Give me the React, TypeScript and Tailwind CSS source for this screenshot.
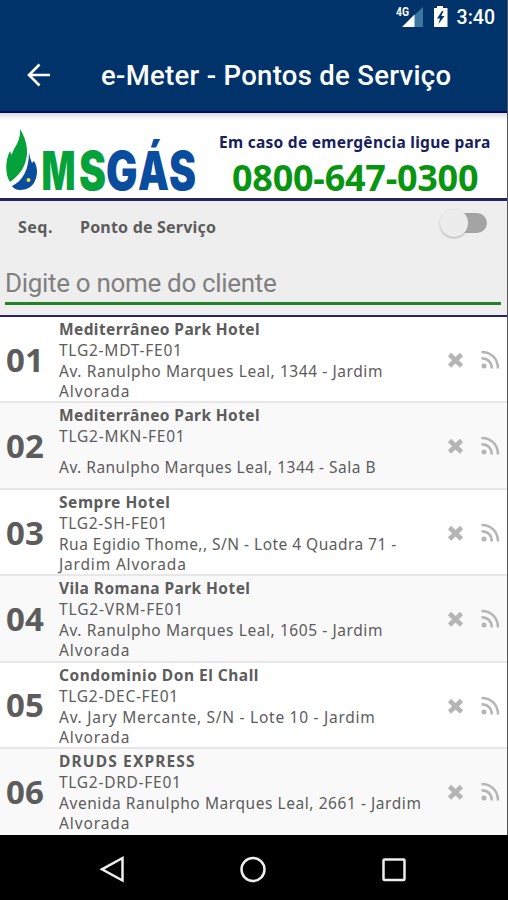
import React from "react";

type Point = {
  seq: string;
  name: string;
  nameTracking: string;
  code: string;
  codeTracking: string;
  address: { text: string; tracking: string }[];
};

const points: Point[] = [
  {
    seq: "01",
    name: "Mediterrâneo Park Hotel",
    nameTracking: "tracking-[0.4px]",
    code: "TLG2-MDT-FE01",
    codeTracking: "tracking-[0.75px]",
    address: [
      { text: "Av. Ranulpho Marques Leal, 1344 - Jardim", tracking: "tracking-[0.58px]" },
      { text: "Alvorada", tracking: "tracking-[0.9px]" },
    ],
  },
  {
    seq: "02",
    name: "Mediterrâneo Park Hotel",
    nameTracking: "tracking-[0.4px]",
    code: "TLG2-MKN-FE01",
    codeTracking: "tracking-[0.77px]",
    address: [{ text: "Av. Ranulpho Marques Leal, 1344 - Sala B", tracking: "tracking-[0.48px]" }],
  },
  {
    seq: "03",
    name: "Sempre Hotel",
    nameTracking: "tracking-[0.55px]",
    code: "TLG2-SH-FE01",
    codeTracking: "tracking-[0.68px]",
    address: [
      { text: "Rua Egidio Thome,, S/N - Lote 4 Quadra 71 -", tracking: "tracking-[0.47px]" },
      { text: "Jardim Alvorada", tracking: "tracking-[0.83px]" },
    ],
  },
  {
    seq: "04",
    name: "Vila Romana Park Hotel",
    nameTracking: "tracking-[0.43px]",
    code: "TLG2-VRM-FE01",
    codeTracking: "tracking-[0.85px]",
    address: [
      { text: "Av. Ranulpho Marques Leal, 1605 - Jardim", tracking: "tracking-[0.58px]" },
      { text: "Alvorada", tracking: "tracking-[0.9px]" },
    ],
  },
  {
    seq: "05",
    name: "Condominio Don El Chall",
    nameTracking: "tracking-[0.5px]",
    code: "TLG2-DEC-FE01",
    codeTracking: "tracking-[0.7px]",
    address: [
      { text: "Av. Jary Mercante, S/N - Lote 10 - Jardim", tracking: "tracking-[0.73px]" },
      { text: "Alvorada", tracking: "tracking-[0.9px]" },
    ],
  },
  {
    seq: "06",
    name: "DRUDS EXPRESS",
    nameTracking: "tracking-[1.15px]",
    code: "TLG2-DRD-FE01",
    codeTracking: "tracking-[0.72px]",
    address: [
      { text: "Avenida Ranulpho Marques Leal, 2661 - Jardim", tracking: "tracking-[0.56px]" },
      { text: "Alvorada", tracking: "tracking-[0.9px]" },
    ],
  },
];

function StatusBar() {
  return (
    <div className="flex h-9 items-center justify-end pr-3 text-white">
      <svg className="h-9 w-[60px]" viewBox="0 0 60 36">
        <path d="M28 7V27H19V15.500Z" fill="#3a78a2" />
        <path d="M7 27L19.500 14.500V27Z" fill="#fff" />
        <text x="1" y="16" fontSize="12" fontWeight="700" fill="#fff" fontFamily="Roboto, sans-serif" textLength="13" lengthAdjust="spacingAndGlyphs">4G</text>
        <path d="M42 6h6v2h4.500v19H39V8h3z" fill="#fff" />
        <path d="M47 11l-5 7.500h3l-1.500 5.500 6-8h-3.200l2.200-5z" fill="#00336a" />
      </svg>
      <span className="ml-0.5 text-[19.500px] leading-9 font-medium">3:40</span>
    </div>
  );
}

function Logo() {
  return (
    <svg className="h-[85px] w-[205px] shrink-0" viewBox="0 113 205 85">
      <path d="M20 129C25 137 27.500 146 27 154C26 166 20 175 10 182C5 175 5 160 10 151L11.500 155L14 149C18 143 20.500 137 20 129Z" fill="#05a23b" />
      <path d="M29 152C30 159 31 160 32 163L34 161C37 166 38 172 36 178C34 186 28 190 20 190C16 190 13 188 12 186C23 181 29 169 29 152Z" fill="#0a4c9e" />
      <circle cx="28.500" cy="180" r="2" fill="#e8e337" />
      <g fontFamily="Inter, sans-serif" fontWeight="900" fontSize="53">
        <text x="41.500" y="189.500" fill="#05a23b" textLength="34" lengthAdjust="spacingAndGlyphs">M</text>
        <text x="79" y="189.500" fill="#05a23b" textLength="27" lengthAdjust="spacingAndGlyphs">S</text>
        <text x="106" y="189.500" fill="#0a4c9e" textLength="31.500" lengthAdjust="spacingAndGlyphs">G</text>
        <text x="138" y="189.500" fill="#0a4c9e" textLength="31" lengthAdjust="spacingAndGlyphs">Á</text>
        <text x="169" y="189.500" fill="#0a4c9e" textLength="27" lengthAdjust="spacingAndGlyphs">S</text>
      </g>
    </svg>
  );
}

function Row({ point, striped }: { point: Point; striped: boolean }) {
  return (
    <li className={`flex h-[86.4px] shrink-0 border-b-2 border-[#e7e7e7] text-[#5c5c5c] last:h-[86px] last:border-b-0 ${striped ? "bg-[#f9f9f9]" : "bg-white"}`}>
      <div className="flex h-[85px] w-[59px] items-center pl-1.5 text-[33px] font-bold">{point.seq}</div>
      <div className="flex min-w-0 flex-1 flex-col whitespace-nowrap">
        <span className={`mt-0.5 text-[15.500px] leading-[21px] font-bold ${point.nameTracking}`}>{point.name}</span>
        <span className={`text-[15.500px] leading-[21px] ${point.codeTracking}`}>{point.code}</span>
        <div className="flex h-10 flex-col justify-center">
          {point.address.map((line) => (
            <span key={line.text} className={`text-[15.500px] leading-[20px] ${line.tracking}`}>{line.text}</span>
          ))}
        </div>
      </div>
      <svg className="mt-[33px] mr-[7px] h-5 w-[54px] shrink-0" viewBox="0 0 54 20">
        <path d="M3.500 4.500L15.500 16M15.500 4.500L3.500 16" stroke="#b5b5b5" strokeWidth="4.600" fill="none" />
        <g stroke="#b5b5b5" strokeWidth="2.500" fill="none">
          <path d="M35.500 1.900C45.500 1.900 52 9 52 18.500" />
          <path d="M35.500 8.200C42 8.200 45.800 12.500 45.800 18.500" />
        </g>
        <circle cx="38" cy="16" r="2.500" fill="#b5b5b5" />
      </svg>
    </li>
  );
}

export default function App() {
  return (
    <div className="flex h-[900px] w-[508px] flex-col overflow-hidden bg-black font-['Noto_Sans',sans-serif]">
      <div className="flex h-[835px] flex-col border-r border-[#555]">
        <header className="h-[113px] shrink-0 border-b-2 border-[#06095c] bg-[#00336a] font-['Roboto',sans-serif]">
          <StatusBar />
          <div className="flex h-[77px] items-center pl-[26px] text-white">
            <svg className="h-6 w-6" viewBox="0 0 24 24" fill="none" stroke="#fff" strokeWidth="2.600">
              <path d="M24 12H3M13.500 1.500L3 12l10.500 10.500" />
            </svg>
            <h1 className="mt-0.5 ml-[51px] text-[27.500px] font-medium tracking-[0.3px] whitespace-nowrap">e-Meter - Pontos de Serviço</h1>
          </div>
        </header>

        <section className="flex h-[88px] shrink-0 border-b-[3px] border-[#272462] bg-gradient-to-b from-[#dcdce4] via-white via-[8%] to-white">
          <Logo />
          <div className="flex flex-1 flex-col whitespace-nowrap">
            <p className="mt-[18px] ml-3.5 text-[15.500px] leading-[22px] font-bold tracking-[0.28px] text-[#17205e]">Em caso de emergência ligue para</p>
            <p className="mt-1 ml-[27px] text-[36px] leading-[42px] font-bold tracking-[-0.25px] text-[#089510]">0800-647-0300</p>
          </div>
        </section>

        <section className="flex h-[116px] shrink-0 flex-col border-b-2 border-[#272462] bg-[#eeeeee]">
          <div className="flex h-[52px] items-center pr-5 text-[16px] font-bold text-[#5c5c5c]">
            <span className="ml-[18px] w-[62px] tracking-[0.5px]">Seq.</span>
            <span className="flex-1 tracking-[0.2px]">Ponto de Serviço</span>
            <span className="mb-2 flex h-5 w-[45px] items-center rounded-full bg-gradient-to-r from-transparent from-50% to-[#a4a4a4] to-50%">
              <span className="-ml-[2px] size-7 shrink-0 rounded-full bg-[#ececec] shadow-[0_1px_2px_#aaa]" />
            </span>
          </div>
          <div className="mr-1.5 ml-[5px] flex h-[52px] items-end border-b-[3px] border-[#23832a] pb-0.5 font-['Roboto',sans-serif] text-[26px] leading-[34px] tracking-[-0.32px] text-[#808080]">Digite o nome do cliente</div>
        </section>

        <ul className="flex min-h-0 flex-1 flex-col">
          {points.map((point, index) => (
            <Row key={point.seq} point={point} striped={index % 2 === 1} />
          ))}
        </ul>
      </div>

      <nav className="flex h-[65px] items-center justify-center bg-black">
        <svg className="h-[65px] w-[508px]" viewBox="0 835 508 65" fill="none" stroke="#eee" strokeWidth="2.500">
          <path d="M122.500 858V880.500L102 869.300Z" />
          <circle cx="253" cy="869.500" r="11.500" />
          <rect x="383.500" y="859.500" width="21" height="20.500" rx="1" />
        </svg>
      </nav>
    </div>
  );
}
